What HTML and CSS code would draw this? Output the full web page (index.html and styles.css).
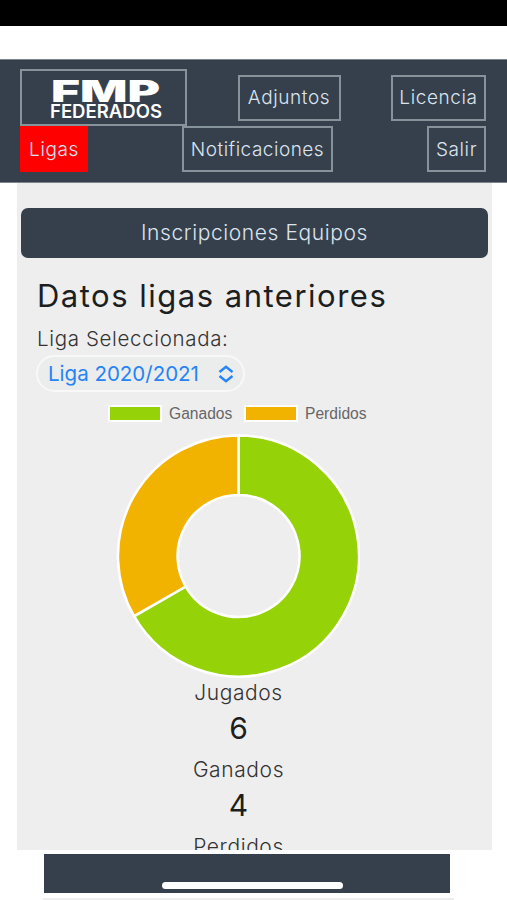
FILE: index.html
```html
<!DOCTYPE html>
<html lang="es">
<head>
    <meta charset="UTF-8">
    <meta name="viewport" content="width=device-width, initial-scale=1.0">
    <title>FMP Federados</title>
    <link rel="stylesheet" href="styles.css">
</head>
<body>

    <div class="status-bar"></div>

    <header class="menu">
        <nav class="menu-row">
            <a class="menu-item logo" href="#">
                <svg width="112" height="48" viewBox="0 0 112 48">
                    <text class="logo-top" x="1" y="27.5" textLength="109" lengthAdjust="spacingAndGlyphs">FMP</text>
                    <text class="logo-bottom" x="0" y="43.5" textLength="112" lengthAdjust="spacingAndGlyphs">FEDERADOS</text>
                </svg>
            </a>
            <a class="menu-item adjuntos" href="#">Adjuntos</a>
            <a class="menu-item licencia" href="#">Licencia</a>
        </nav>
        <nav class="menu-row">
            <a class="menu-item ligas active" href="#">Ligas</a>
            <a class="menu-item notificaciones" href="#">Notificaciones</a>
            <a class="menu-item salir" href="#">Salir</a>
        </nav>
    </header>

    <main class="panel">
        <button class="btn-inscripciones">Inscripciones Equipos</button>

        <section class="datos">
            <h2>Datos ligas anteriores</h2>
            <p class="label">Liga Seleccionada:</p>
            <div class="select">
                <span>Liga 2020/2021</span>
                <svg width="16" height="18" viewBox="0 0 16 18">
                    <path d="M1.5 7 L8 1.8 L14.5 7 M1.5 11 L8 16.2 L14.5 11"/>
                </svg>
            </div>

            <div class="legend">
                <span class="color ganados"></span><span class="legend-text">Ganados</span>
                <span class="color perdidos"></span><span class="legend-text">Perdidos</span>
            </div>

            <svg class="chart" width="244" height="244" viewBox="-122.5 -122 244 244">
                <path class="ganados" d="M0 -120.5 A120.5 120.5 0 1 1 -104.4 60.2 L-52.8 30.5 A61 61 0 1 0 0 -61 Z"/>
                <path class="perdidos" d="M-104.4 60.2 A120.5 120.5 0 0 1 0 -120.5 L0 -61 A61 61 0 0 0 -52.8 30.5 Z"/>
            </svg>

            <dl class="stats">
                <dt>Jugados</dt>
                <dd>6</dd>
                <dt>Ganados</dt>
                <dd>4</dd>
                <dt>Perdidos</dt>
            </dl>
        </section>
    </main>

    <footer class="footer">
        <div class="home-bar"></div>
    </footer>
    <div class="footer-line"></div>

</body>
</html>
```
FILE: styles.css
```css
* {
    box-sizing: border-box;
}

body {
    margin: 0;
    height: 900px;
    overflow: hidden;
    background: #fff;
    color: #1c1e20;
    font-family: Inter, "Liberation Sans", sans-serif;
}

.status-bar {
    height: 26px;
    background: #000;
}

.menu {
    margin-top: 33px;
    height: 124px;
    padding: 9px 21px 0 20px;
    background: #35404c;
    border-top: 1px solid #7d858c;
    border-bottom: 1px solid #7d858c;
}

.menu-row {
    display: flex;
    justify-content: space-between;
    align-items: center;
}

.menu-item {
    display: flex;
    align-items: center;
    justify-content: center;
    height: 46px;
    border: 2px solid #87939a;
    color: #dbe4ee;
    font-size: 19px;
    font-weight: 300;
    letter-spacing: 0.6px;
    text-decoration: none;
    white-space: nowrap;
}

.logo {
    width: 167px;
    height: 57px;
    padding-left: 4px;
    letter-spacing: 0;
}

.logo-top,
.logo-bottom {
    fill: #fff;
    font-family: Inter, sans-serif;
}

.logo-top {
    font-size: 30px;
    font-weight: 900;
}

.logo-bottom {
    font-size: 18px;
    font-weight: 600;
}

.adjuntos {
    width: 103px;
}

.licencia {
    width: 95px;
}

.ligas {
    width: 68px;
}

.notificaciones {
    width: 151px;
    letter-spacing: 0.5px;
}

.salir {
    width: 59px;
}

.menu-item.active {
    background: #f00;
    border-color: #f00;
}

.panel {
    height: 667px;
    margin: 0 15px 0 17px;
    padding: 25px 4px 0;
    background: #eee;
    overflow: hidden;
}

.btn-inscripciones {
    display: block;
    width: 100%;
    height: 50px;
    padding: 0 0 2px;
    border: none;
    border-radius: 7px;
    background: #35404c;
    color: #dbe4ee;
    font-family: inherit;
    font-size: 21px;
    font-weight: 300;
    letter-spacing: 0.6px;
}

.datos {
    width: 403px;
    margin-left: 16px;
}

h2 {
    margin: 18px 0 0;
    font-size: 31px;
    font-weight: 400;
    line-height: 40px;
    letter-spacing: 1.5px;
    white-space: nowrap;
}

.label {
    margin: 8px 0 0;
    color: #333;
    font-size: 20.5px;
    font-weight: 300;
    line-height: 30px;
    letter-spacing: 0.65px;
}

.select {
    display: flex;
    align-items: center;
    justify-content: space-between;
    width: 209px;
    height: 37px;
    margin: 1px 0 0 -1px;
    padding: 0 9px 0 10px;
    border: 2px solid #f8f8f8;
    border-radius: 19px;
    background: #ebecec;
    color: #2484f8;
    font-size: 20.5px;
    white-space: nowrap;
}

.select path {
    fill: none;
    stroke: #2484f8;
    stroke-width: 2.4;
}

.legend {
    display: flex;
    align-items: center;
    height: 18px;
    margin: 12px 0 0 71px;
    color: #666;
    font: 15.6px "Liberation Sans", sans-serif;
}

.color {
    width: 54px;
    height: 17px;
    border: 2px solid #fff;
}

.legend-text {
    width: 76px;
    padding: 2px 0 0 7px;
}

.legend-text + .color {
    margin-left: 6px;
}

.color.ganados {
    background: #95d208;
}

.color.perdidos {
    background: #f2b200;
}

.chart {
    display: block;
    margin: 12px 0 0 79px;
}

.chart path {
    stroke: #fff;
    stroke-width: 2.5;
}

.chart .ganados {
    fill: #95d208;
}

.chart .perdidos {
    fill: #f2b200;
}

.stats {
    margin: 0;
    text-align: center;
}

.stats dt {
    height: 30px;
    color: #333;
    font-size: 21px;
    font-weight: 300;
    line-height: 30px;
    letter-spacing: 0.6px;
}

.stats dd {
    height: 40px;
    margin: 0 0 7px;
    font-size: 30px;
    line-height: 40px;
}

.footer {
    display: flex;
    justify-content: center;
    width: 406px;
    height: 39px;
    margin: 4px 0 0 44px;
    padding: 28px 0 0 10px;
    background: #35404c;
}

.home-bar {
    width: 181px;
    height: 7px;
    border-radius: 4px;
    background: #fff;
}

.footer-line {
    width: 411px;
    height: 2px;
    margin: 5px 0 0 43px;
    background: #eee;
}
```
